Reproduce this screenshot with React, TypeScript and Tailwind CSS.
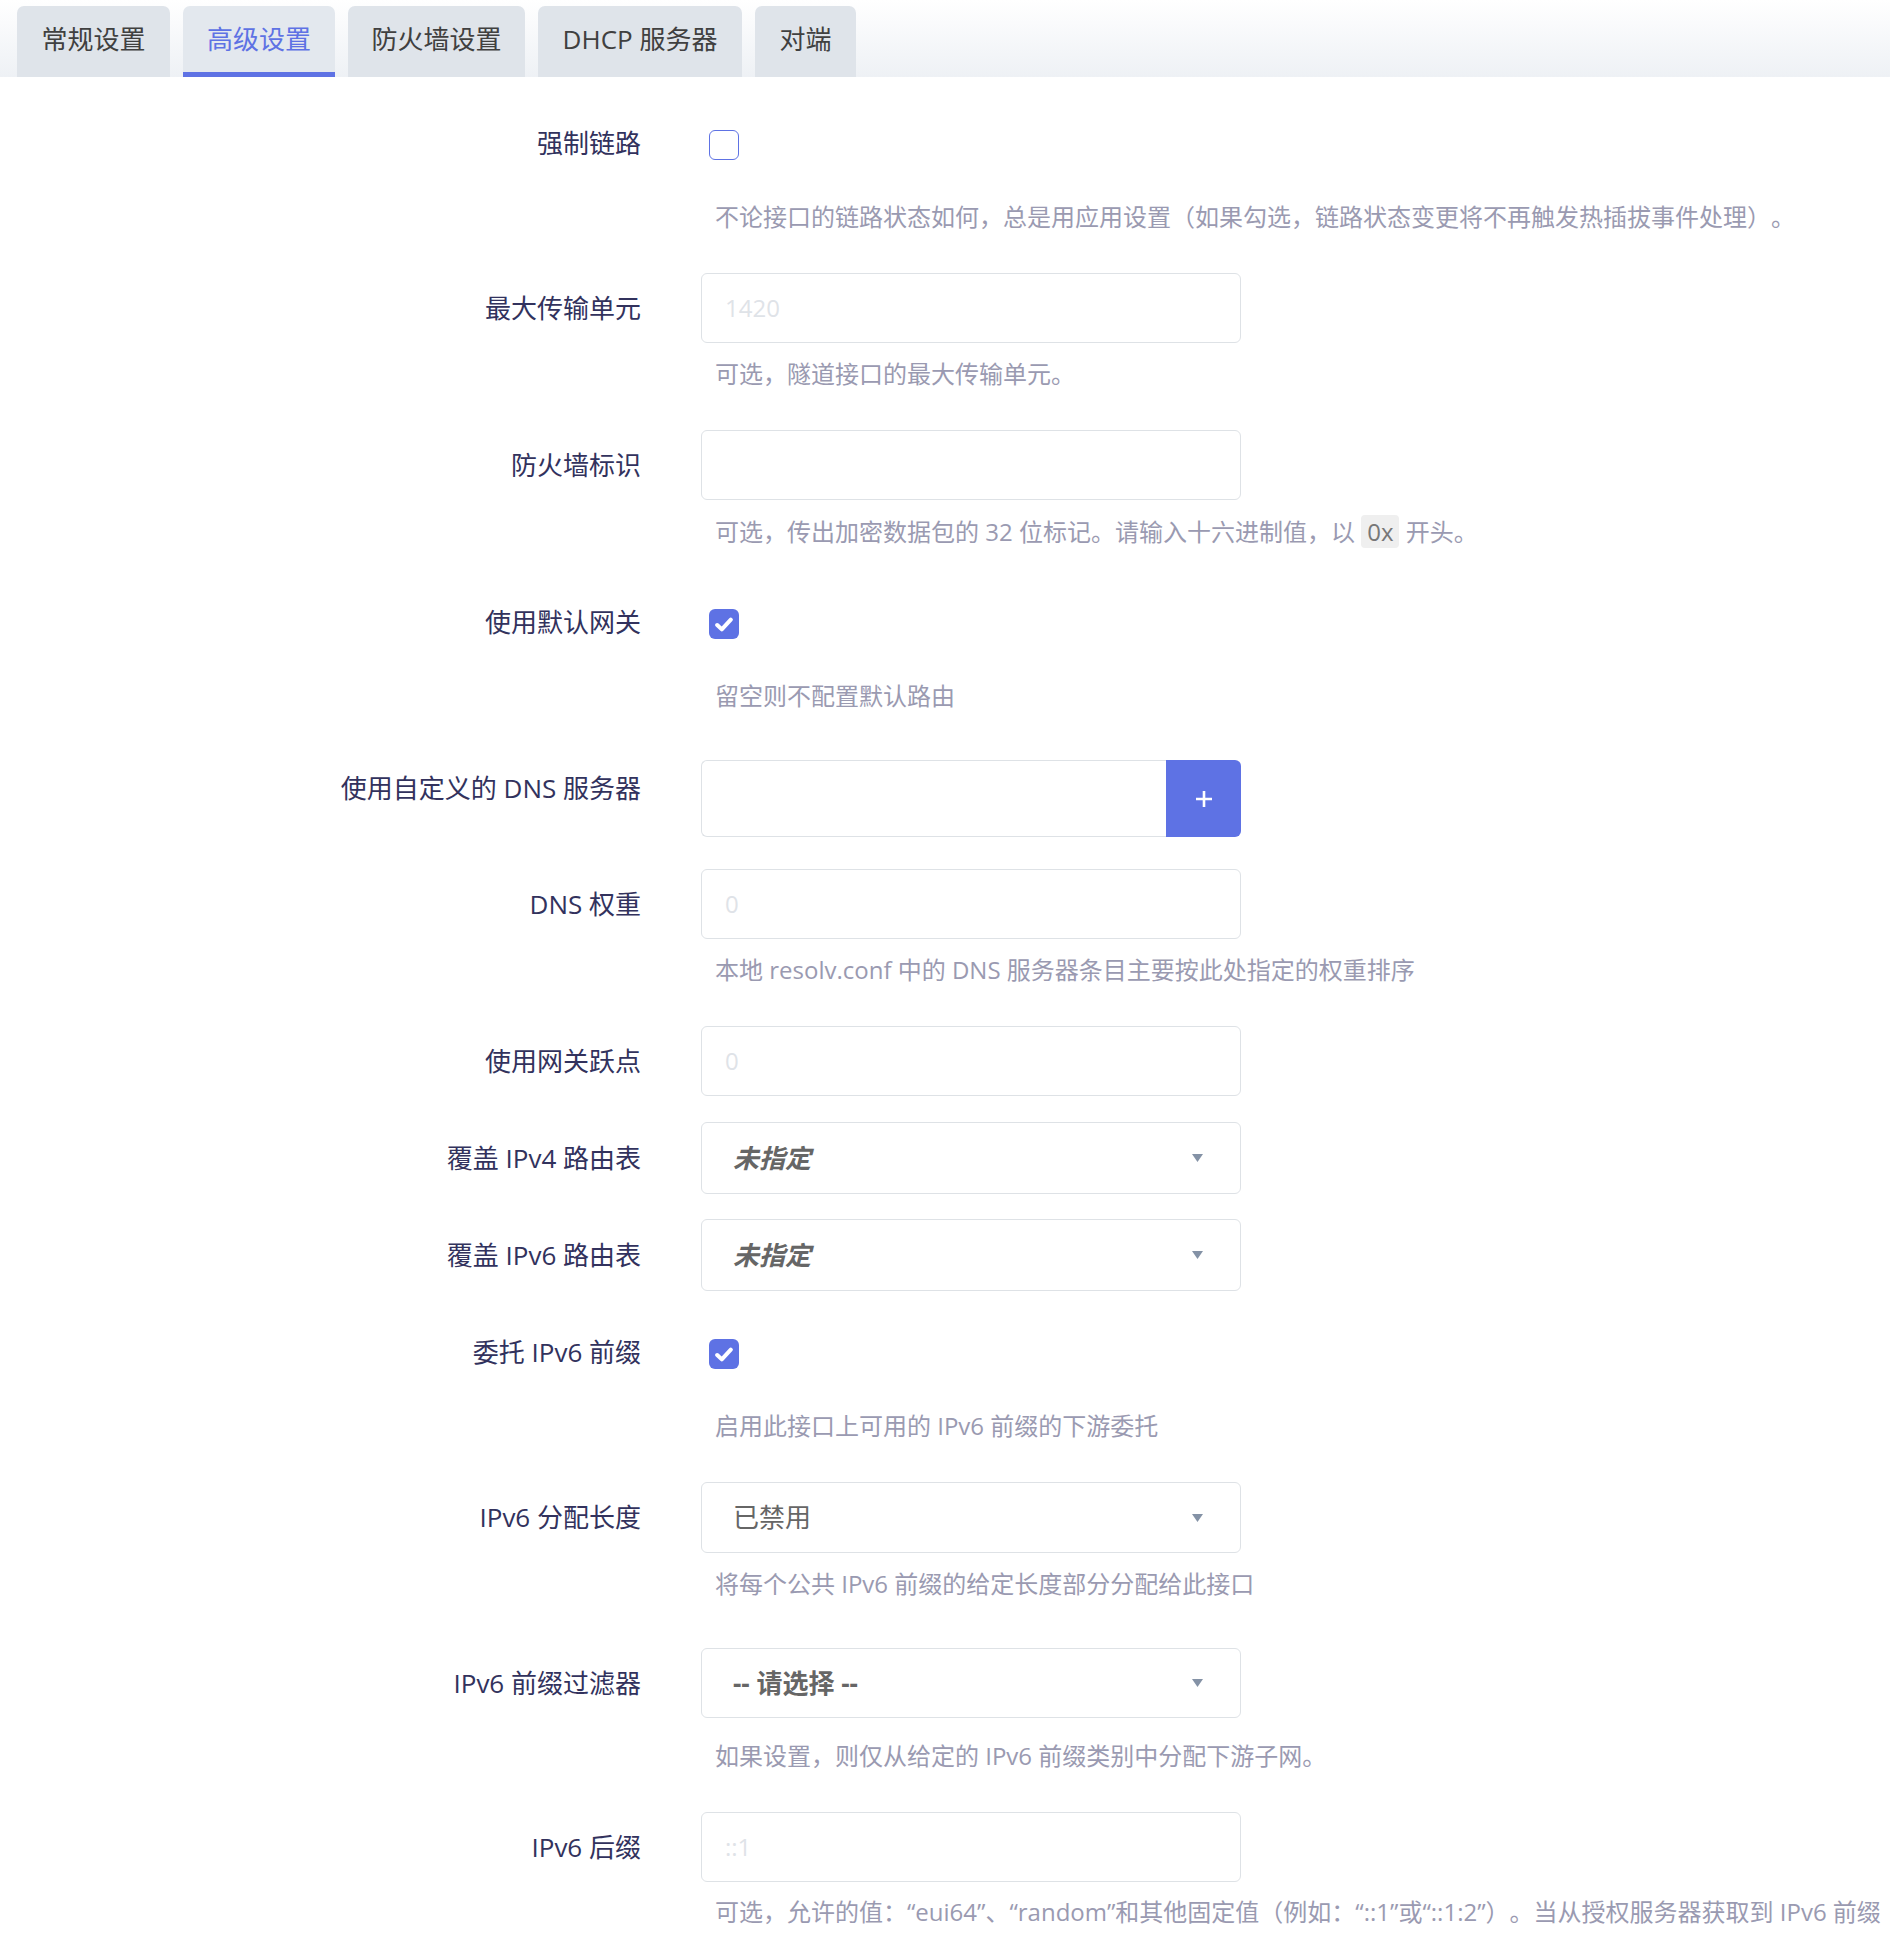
import type { ReactNode } from "react";

const tabs = [
  { name: "常规设置", w: "w-[153px]" },
  { name: "高级设置", w: "w-[152px]", active: true },
  { name: "防火墙设置", w: "w-[177px]" },
  { name: "DHCP 服务器", w: "w-[204px]" },
  { name: "对端", w: "w-[101px]" },
];

function Row({
  label,
  labelH,
  className,
  children,
  desc,
  descClass = "",
}: {
  label: string;
  labelH: string;
  className: string;
  children: ReactNode;
  desc?: ReactNode;
  descClass?: string;
}) {
  return (
    <div className={className}>
      <div className="flex items-start">
        <div
          className={`w-[641px] shrink-0 flex items-center justify-end text-[26px] text-[#32325d] whitespace-nowrap ${labelH}`}
        >
          {label}
        </div>
        <div className="ml-[60px] w-[540px] shrink-0">{children}</div>
      </div>
      {desc && (
        <div className={`ml-[715px] whitespace-nowrap text-[24px] leading-[36px] text-[#9a9ab1] ${descClass}`}>
          {desc}
        </div>
      )}
    </div>
  );
}

function Checkbox({ checked }: { checked?: boolean }) {
  return (
    <div className="h-[40px] flex items-center pl-[8px]">
      {checked ? (
        <div className="w-[30px] h-[30px] rounded-[6px] bg-[#5e72e4] flex items-center justify-center">
          <svg width="18" height="15" viewBox="0 0 18 15">
            <path d="M2.2 8l4.6 4.4L15.8 2.6" fill="none" stroke="#fff" strokeWidth="4" strokeLinecap="round" strokeLinejoin="round" />
          </svg>
        </div>
      ) : (
        <div className="w-[30px] h-[30px] rounded-[6px] border-[1.5px] border-[#5e72e4] bg-white" />
      )}
    </div>
  );
}

function TextInput({ placeholder = "" }: { placeholder?: string }) {
  return (
    <div className="h-[70px] rounded-[6px] border border-[#dee2e6] bg-white flex items-center px-[23px] text-[24px] text-[#dfe3e8]">
      {placeholder}
    </div>
  );
}

function Select({ children, h = "h-[72px]" }: { children: ReactNode; h?: string }) {
  return (
    <div
      className={`${h} rounded-[6px] border border-[#dee2e6] bg-white flex items-center justify-between pl-[31px] pr-[37px] text-[26px] text-[#666666]`}
    >
      <span>{children}</span>
      <svg width="11" height="8" viewBox="0 0 11 8">
        <path d="M0 0h11L5.5 8z" fill="#8492a6" />
      </svg>
    </div>
  );
}

export default function App() {
  return (
    <div className="w-full overflow-hidden bg-white pb-[30px] [text-spacing-trim:space-all] font-['Open_Sans','Noto_Sans_CJK_SC',sans-serif]">
      {/* tab strip */}
      <div className="h-[77px] flex items-end gap-[13px] pl-[17px] bg-gradient-to-b from-white to-[#eef1f5]">
        {tabs.map((t) => (
          <div
            key={t.name}
            className={`${t.w} h-[71px] rounded-t-[7px] flex items-center justify-center border-b-[5px] text-[26px] whitespace-nowrap ${
              t.active
                ? "bg-[#e3e8ee] border-[#5e72e4] text-[#5e72e4]"
                : "bg-[#dfe4ea] border-transparent text-[#404040]"
            }`}
          >
            {t.name}
          </div>
        ))}
      </div>

      <Row
        label="强制链路"
        labelH="h-[36px]"
        className="mt-[48px]"
        desc="不论接口的链路状态如何，总是用应用设置（如果勾选，链路状态变更将不再触发热插拔事件处理）。"
        descClass="mt-[34px]"
      >
        <Checkbox />
      </Row>

      <Row label="最大传输单元" labelH="h-[70px]" className="mt-[38px]" desc="可选，隧道接口的最大传输单元。" descClass="mt-[13px]">
        <TextInput placeholder="1420" />
      </Row>

      <Row
        label="防火墙标识"
        labelH="h-[70px]"
        className="mt-[38px]"
        desc={
          <span>
            可选，传出加密数据包的 32 位标记。请输入十六进制值，以{" "}
            <span className="inline-block rounded-[4px] bg-[#efefef] px-[6px] leading-[33px] text-[#777777]">0x</span> 开头。
          </span>
        }
        descClass="mt-[14px]"
      >
        <TextInput />
      </Row>

      <Row label="使用默认网关" labelH="h-[36px]" className="mt-[54px]" desc="留空则不配置默认路由" descClass="mt-[34px]">
        <Checkbox checked />
      </Row>

      <Row label="使用自定义的 DNS 服务器" labelH="h-[56px]" className="mt-[46px]">
        <div className="h-[77px] flex">
          <div className="flex-1 rounded-l-[6px] border border-r-0 border-[#dee2e6] bg-white" />
          <div className="w-[75px] rounded-r-[6px] bg-[#5e72e4] flex items-center justify-center">
            <svg width="18" height="18" viewBox="0 0 18 18">
              <path d="M9 1v16M1 9h16" stroke="#fff" strokeWidth="2.6" />
            </svg>
          </div>
        </div>
      </Row>

      <Row
        label="DNS 权重"
        labelH="h-[70px]"
        className="mt-[32px]"
        desc="本地 resolv.conf 中的 DNS 服务器条目主要按此处指定的权重排序"
        descClass="mt-[13px]"
      >
        <TextInput placeholder="0" />
      </Row>

      <Row label="使用网关跃点" labelH="h-[70px]" className="mt-[38px]">
        <TextInput placeholder="0" />
      </Row>

      <Row label="覆盖 IPv4 路由表" labelH="h-[72px]" className="mt-[26px]">
        <Select>
          <i className="font-bold">未指定</i>
        </Select>
      </Row>

      <Row label="覆盖 IPv6 路由表" labelH="h-[72px]" className="mt-[25px]">
        <Select>
          <i className="font-bold">未指定</i>
        </Select>
      </Row>

      <Row label="委托 IPv6 前缀" labelH="h-[36px]" className="mt-[43px]" desc="启用此接口上可用的 IPv6 前缀的下游委托" descClass="mt-[34px]">
        <Checkbox checked />
      </Row>

      <Row
        label="IPv6 分配长度"
        labelH="h-[71px]"
        className="mt-[38px]"
        desc="将每个公共 IPv6 前缀的给定长度部分分配给此接口"
        descClass="mt-[13px]"
      >
        <Select h="h-[71px]">已禁用</Select>
      </Row>

      <Row
        label="IPv6 前缀过滤器"
        labelH="h-[70px]"
        className="mt-[46px]"
        desc="如果设置，则仅从给定的 IPv6 前缀类别中分配下游子网。"
        descClass="mt-[20px]"
      >
        <Select h="h-[70px]">
          <span className="font-bold">-- 请选择 --</span>
        </Select>
      </Row>

      <Row
        label="IPv6 后缀"
        labelH="h-[70px]"
        className="mt-[38px]"
        desc="可选，允许的值：“eui64”、“random”和其他固定值（例如：“::1”或“::1:2”）。当从授权服务器获取到 IPv6 前缀"
        descClass="mt-[12px]"
      >
        <TextInput placeholder="::1" />
      </Row>
    </div>
  );
}
